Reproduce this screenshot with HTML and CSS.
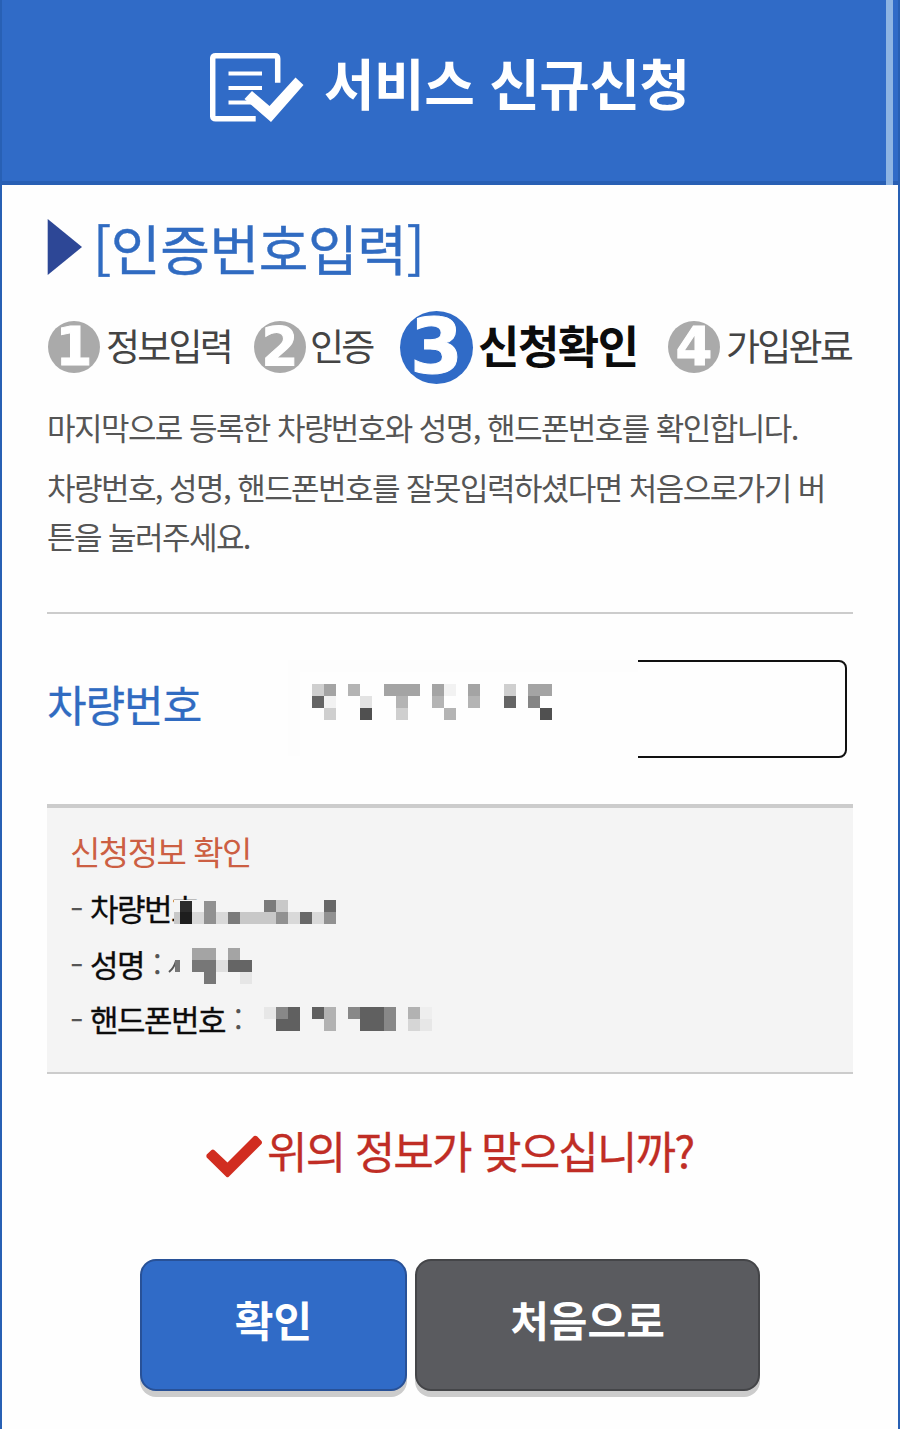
FILE: index.html
```html
<!DOCTYPE html>
<html lang="ko">
<head>
<meta charset="utf-8">
<title>서비스 신규신청</title>
<link rel="stylesheet" href="styles.css">
</head>
<body>
<div class="page">
  <header class="header">
    <svg class="header-icon" width="96" height="72" viewBox="0 0 96 72">
      <path d="M68 30V6Q68 3 65 3H6Q3 3 3 6V63Q3 66 6 66H46" transform="translate(-.3 .8)" fill="none" stroke="#fff" stroke-width="5.5"/>
      <path d="M18.500 21.500H52M18.500 36H52M18.500 50.500H42" fill="none" stroke="#fff" stroke-width="4"/>
      <path d="M34.500 47L42 39L59.500 54L85.500 25.500L93.500 33L61 70Z" fill="#fff"/>
    </svg>
    <h1 class="title">서비스 신규신청</h1>
    <span class="scrollbar"></span>
  </header>
  <main class="content">
    <h2 class="heading">
      <svg width="35" height="56" viewBox="0 0 35 56"><path d="M.7 0L35 28L.7 56Z" fill="#2d4796"/></svg>
      <span class="heading-text">[인증번호입력]</span>
    </h2>
    <ol class="steps">
      <li class="step one"><b class="num">1</b><span class="step-text">정보입력</span></li>
      <li class="step two"><b class="num">2</b><span class="step-text">인증</span></li>
      <li class="step current"><b class="num">3</b><span class="step-text">신청확인</span></li>
      <li class="step four"><b class="num">4</b><span class="step-text">가입완료</span></li>
    </ol>
    <p class="guide">마지막으로 등록한 차량번호와 성명, 핸드폰번호를 확인합니다.</p>
    <p class="guide second">차량번호, 성명, 핸드폰번호를 잘못입력하셨다면 처음으로가기 버<br>튼을 눌러주세요.</p>
    <div class="field">
      <label class="label">차량번호</label>
      <div class="input">
        <svg class="mask" width="350" height="98" viewBox="0 0 350 98" shape-rendering="crispEdges">
          <path fill="#fefefe" d="M0 0H350V98H0Z"/>
          <path fill="#fcfcfc" d="M0 0H12V96H0ZM12 0H350V12H12Z" opacity=".8"/>
          <g transform="translate(24 24)">
            <path fill="#cfcfcf" d="M0 0h12v12H0zM12 24h12v12H12zM84 24h12v12H84zM192 0h12v12h-12z"/>
            <path fill="#a4a4a4" d="M12 0h12v12H12zM72 0h36v12H72zM120 0h12v12h-12zM156 0h12v12h-12zM216 0h24v12h-24z"/>
            <path fill="#b4b4b4" d="M36 0h12v12H36zM84 12h12v12H84zM120 12h12v12h-12zM132 24h12v12h-12zM156 12h12v12h-12z"/>
            <path fill="#656565" d="M0 12h12v12H0zM192 12h12v12h-12z"/>
            <path fill="#f2f2f2" d="M12 12h12v12H12zM132 0h12v12h-12z"/>
            <path fill="#e3e3e3" d="M48 12h12v12H48z"/>
            <path fill="#505050" d="M48 24h12v12H48zM228 24h12v12h-12z"/>
            <path fill="#858585" d="M216 12h12v12h-12z"/>
          </g>
        </svg>
      </div>
    </div>
    <section class="summary">
      <h3 class="summary-title">신청정보 확인</h3>
      <div class="row"><i class="dash">-</i><span class="key">차량번호</span>
        <svg class="pixels plate" width="162" height="28" viewBox="0 0 162 28" shape-rendering="crispEdges">
          <path fill="#f4f4f4" d="M0 1h162v27H0z"/>
          <path fill="#c8c8c8" d="M0 13h6v12H0zM66 13h36v12H66zM102 1h12v12h-12z"/>
          <path fill="#2c2c2c" d="M6 2h12v11H6z"/><path fill="#1e1e1e" d="M6 13h12v12H6z"/>
          <path fill="#d9d9d9" d="M18 13h12v12H18zM42 13h12v12H42zM114 13h12v12h-12zM138 13h12v12h-12z"/>
          <path fill="#919191" d="M30 2h12v23H30zM102 13h12v12h-12zM150 13h12v12h-12z"/>
          <path fill="#7b7b7b" d="M54 13h12v12H54zM90 1h12v12H90z"/>
          <path fill="#686868" d="M126 13h12v12h-12zM150 1h12v12h-12z"/>
        </svg>
      </div>
      <div class="row"><i class="dash">-</i><span class="key">성명</span><span class="colon">:</span>
        <svg class="pixels name" width="85" height="38" viewBox="0 0 85 38" shape-rendering="crispEdges">
          <path fill="none" stroke="#555" stroke-width="2" shape-rendering="auto" d="M1 25Q6 21 8 14"/>
          <path fill="#777" d="M7 13h5v12H7zM36 25h12v12H36zM24 13h24v12H24z"/>
          <path fill="#a4a4a4" d="M24 1h24v12H24zM60 1h12v12H60z"/>
          <path fill="#dfdfdf" d="M48 13h12v12H48z"/>
          <path fill="#e6e6e6" d="M72 25h12v12H72z"/>
          <path fill="#656565" d="M60 13h24v12H60z"/>
        </svg>
      </div>
      <div class="row"><i class="dash">-</i><span class="key">핸드폰번호</span><span class="colon">:</span>
        <svg class="pixels phone" width="168" height="24" viewBox="0 0 168 24" shape-rendering="crispEdges">
          <path fill="#e7e7e7" d="M0 0h12v12H0zM156 12h12v12h-12z"/>
          <path fill="#888" d="M12 0h12v12H12zM84 0h12v12H84zM120 0h12v12h-12zM120 12h12v12h-12z"/>
          <path fill="#606060" d="M24 0h12v24H24zM12 12h12v12H12zM48 0h12v12H48zM96 0h24v24H96z"/>
          <path fill="#b2b2b2" d="M60 0h12v24H60zM144 0h12v12h-12z"/>
          <path fill="#d6d6d6" d="M144 12h12v12h-12z"/>
          <path fill="#eee" d="M156 0h12v12h-12z"/>
        </svg>
      </div>
    </section>
    <div class="question">
      <svg width="57" height="43" viewBox="0 0 57 43"><path d="M.7 19.500L5.500 15Q7 14 8.500 15.300L21.500 27.500L48 1Q49.500 .2 51 1.300L55.500 6Q56.500 7.500 55.500 9L22.500 42Q21.500 42.700 20.500 42L.7 22.500Q0 21 .7 19.500Z" fill="#d12d20"/></svg>
      <span class="question-text">위의 정보가 맞으십니까?</span>
    </div>
    <div class="actions">
      <button class="btn primary">확인</button>
      <button class="btn secondary">처음으로</button>
    </div>
  </main>
</div>
</body>
</html>
```
FILE: styles.css
```css
* { box-sizing: border-box; margin: 0; padding: 0; }
body { font-family: "Noto Sans CJK KR", sans-serif; background: #fefefe; white-space: nowrap; overflow: hidden; }
.page { width: 900px; height: 1429px; border: solid #2860b4; border-width: 0 2px; background: #fefefe; }
.header { position: relative; display: flex; height: 185px; padding: 52px 0 0 208px; background: #306bc7; border-bottom: 4px solid #285fb4; }
.header-icon { flex: none; }
.title { margin-left: 18px; margin-top: -7px; height: 72px; line-height: 72px; font-size: 55px; font-weight: 700; letter-spacing: -0.5px; color: #fff; }
.scrollbar { position: absolute; right: 5px; top: 0; width: 7px; height: 185px; background: #8db4e3; }
.content { padding: 34px 45px 0; }
.heading { display: flex; height: 56px; font-weight: 400; }
.heading-text { margin-left: 11px; line-height: 58px; font-size: 54px; letter-spacing: -0.4px; color: #306bc1; -webkit-text-stroke: 0.4px; }
.steps { display: flex; align-items: center; height: 74px; margin-top: 35px; list-style: none; }
.step { display: flex; align-items: center; color: #444; font-size: 37px; letter-spacing: -2.8px; }
.num { display: flex; flex: none; align-items: center; justify-content: center; width: 52px; height: 52px; padding-bottom: 1px; border-radius: 50%; background: #aaa; color: #fff; font: bold 53px/51px "DejaVu Sans", sans-serif; letter-spacing: 0; -webkit-text-stroke: 1px #fff; }
.step-text { margin-left: 6px; padding-bottom: 4px; line-height: 48px; }
.one { width: 206px; margin-left: 1px; }
.two { width: 146px; }
.two .step-text { margin-left: 4px; }
.current { width: 268px; color: #0c0c0c; font-size: 45px; font-weight: 700; letter-spacing: -1.5px; }
.current .num { width: 73px; height: 73px; background: #306bc7; font-size: 76px; line-height: 72px; }
.current .step-text { margin-left: 5px; padding-bottom: 5px; }
.guide { margin-top: 18px; font-size: 31px; line-height: 49px; letter-spacing: -1.560px; color: #555; }
.guide.second { margin-top: 11px; }
.field { display: flex; align-items: center; height: 192px; margin-top: 52px; border-top: 2px solid #ccc; }
.label { width: 241px; padding-bottom: 13px; font-size: 43px; letter-spacing: -1px; color: #306bc1; -webkit-text-stroke: 0.3px; }
.input { width: 559px; height: 98px; border: 2px solid #111; border-radius: 8px; }
.mask { display: block; margin: -2px 0 0 -2px; }
.summary { height: 270px; padding: 22px 23px 0; background: #f4f4f4; border-top: 4px solid #ccc; border-bottom: 2px solid #ccc; }
.summary-title { height: 50px; line-height: 42px; font-size: 33px; font-weight: 400; letter-spacing: -1.5px; color: #cc5f43; }
.row { display: flex; align-items: center; height: 55.500px; font-size: 31px; line-height: 55px; letter-spacing: -1.5px; color: #0c0c0c; }
.key { -webkit-text-stroke: 0.3px; }
.dash { width: 20px; font-style: normal; color: #555; transform: scaleX(1.25); transform-origin: 0 50%; }
.colon { margin-left: 9px; color: #555; }
.pixels { flex: none; }
.plate { margin: 10px 0 0 -24px; }
.name { margin: 6px 0 0 8px; }
.phone { margin-left: 23px; }
.question { display: flex; height: 60px; margin-top: 49px; padding-left: 159px; }
.question svg { margin-top: 12px; }
.question-text { margin-left: 4px; line-height: 55px; font-size: 44px; letter-spacing: -1.850px; color: #c02d25; -webkit-text-stroke: 0.3px; }
.actions { display: flex; gap: 8px; margin-top: 76px; padding-left: 93px; }
.btn { height: 132px; padding-bottom: 14px; border: 2px solid #285197; border-radius: 16px; box-shadow: 0 6px 0 #ccc; font: bold 42px "Noto Sans CJK KR", sans-serif; letter-spacing: 0; color: #fff; }
.primary { width: 267px; background: #306bc7; }
.secondary { width: 345px; background: #5a5b5f; border-color: #444548; }
```
